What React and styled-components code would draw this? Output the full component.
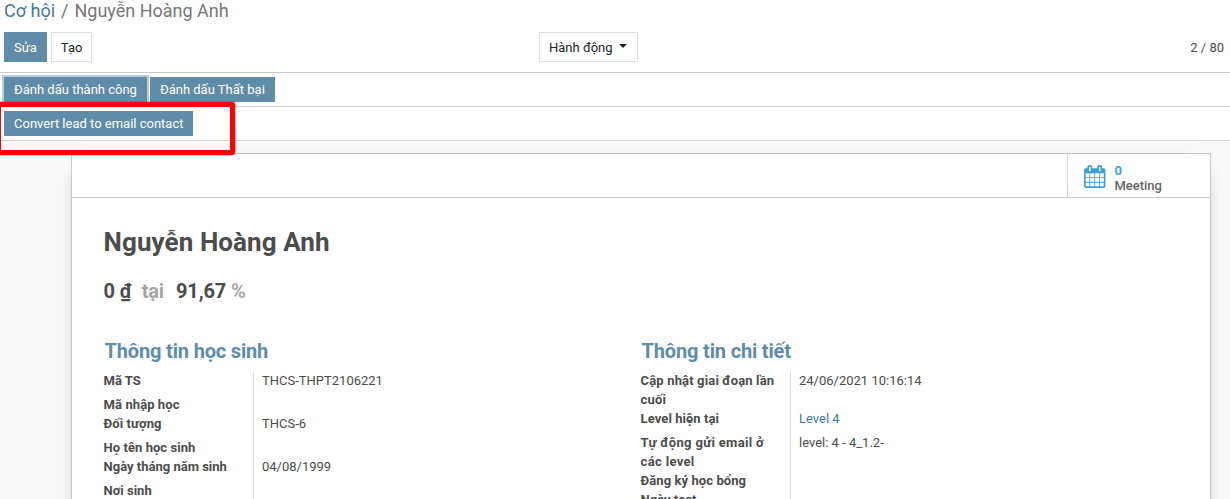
import React from 'react';
import styled, { createGlobalStyle } from 'styled-components';

const Global = createGlobalStyle`
  * { box-sizing: border-box; }
  html, body { margin: 0; height: 100%; overflow: hidden; }
  body {
    font-family: Roboto, "Noto Sans", sans-serif;
    font-size: 13px;
    line-height: 19px;
    color: #4c4c4c;
    background: #fff;
  }
`;

const Page = styled.div`
  position: relative;
  height: 499px;
  overflow: hidden;
  display: flex;
  flex-direction: column;
`;

const ControlPanel = styled.header`
  flex: none;
  height: 73px;
  padding: 0 6px 0 4px;
  border-bottom: 1px solid #c8c8c8;
`;

const Breadcrumb = styled.nav`
  display: flex;
  height: 32px;
  font-size: 18px;
  line-height: 22px;
  color: #777;
  a { color: #44799a; }
`;

const Slash = styled.span`
  margin: 0 6px;
`;

const Toolbar = styled.div`
  display: grid;
  grid-template-columns: 535px auto 1fr;
  align-items: center;
`;

const ButtonGroup = styled.div`
  display: flex;
  gap: 4px;
`;

const Button = styled.button`
  height: 30px;
  padding: 0 9px;
  font: inherit;
  color: ${(p) => (p.$primary ? '#fff' : '#212529')};
  background: ${(p) => (p.$primary ? '#5f8ca9' : '#fff')};
  border: 1px solid ${(p) => (p.$primary ? '#5f8ca9' : '#dee2e6')};
  display: flex;
  align-items: center;
  white-space: nowrap;
`;

const Caret = styled.span`
  margin: -3px 1px 0 6px;
  border: 4px solid transparent;
  border-top-color: #212529;
  border-bottom: 0;
`;

const Pager = styled.div`
  text-align: right;
`;

const StatusBar = styled.div`
  flex: none;
  display: flex;
  align-items: center;
  gap: 3px;
  height: 34px;
  padding-left: 4px;
  border-bottom: 1px solid #ced4da;
`;

const StatusButton = styled(Button)`
  height: 25px;
  padding-right: ${(p) => (p.$tight ? 8 : 9)}px;
  box-shadow: ${(p) => (p.$focused ? '0 0 0 2px #b9ceda' : 'none')};
`;

const FormView = styled.main`
  flex: 1;
  min-height: 0;
  padding: 12px 19px 0 71px;
  background: #f9f9f9;
`;

const Sheet = styled.section`
  height: 420px;
  background: #fff;
  border: 1px solid #c8c8d3;
  box-shadow: 0 5px 20px -15px #000;
`;

const ButtonBox = styled.div`
  display: flex;
  justify-content: flex-end;
  height: 44px;
  border-bottom: 1px solid #c9ccd2;
`;

const StatButton = styled.div`
  display: flex;
  width: 143px;
  padding: 9px 0 0 15.4px;
  border-left: 1px solid #ced4da;
  svg { display: block; margin-top: 2px; }
`;

const StatText = styled.div`
  margin-left: 7.5px;
  font-weight: 500;
  line-height: 15px;
  color: #666;
  b { display: block; color: #3f9fd8; font-weight: 700; }
`;

const SheetBody = styled.div`
  padding: 28px 32px 0 31.6px;
`;

const Title = styled.h1`
  margin: 0;
  font-size: 26px;
  line-height: 32px;
  font-weight: 700;
  letter-spacing: 0.08px;
`;

const Revenue = styled.h2`
  margin: 20px 0 0;
  font-size: 20px;
  line-height: 26px;
  font-weight: 700;
  letter-spacing: -0.15px;
  white-space: pre;
`;

const Muted = styled.span`
  color: #a6a6a6;
  margin: ${(p) => p.$margin || 0};
`;

const Groups = styled.div`
  display: grid;
  grid-template-columns: 537px 537px;
  margin-top: 34px;
`;

const GroupTitle = styled.h3`
  margin: 0 0 7px 1px;
  font-size: 20px;
  line-height: 26px;
  font-weight: 700;
  letter-spacing: -0.17px;
  color: #5f8ca9;
`;

const Field = styled.div`
  display: grid;
  grid-template-columns: 149.4px 1fr;
`;

const Label = styled.div`
  padding-right: 10px;
  font-weight: 700;
  letter-spacing: ${(p) => p.$tracking || 0}px;
`;

const Value = styled.div`
  padding: 0 0 ${(p) => (p.$filled ? 5 : 0)}px 8px;
  min-height: 19px;
  border-left: 1px solid #ddd;
  color: ${(p) => (p.$link ? '#44799a' : 'inherit')};
`;

const Highlight = styled.div`
  position: absolute;
  left: -4px;
  top: 102px;
  width: 239px;
  height: 53px;
  border: 5px solid #fe0000;
  border-radius: 3px;
  box-shadow: 0 0 0 0.5px rgba(254, 0, 0, 0.5);
`;

const CalendarIcon = () => (
  <svg width="23.5" height="23" viewBox="0 0 1792 1792" fill="#3f9fd8">
    <path d="M192 1664h288v-288h-288v288zm352 0h320v-288h-320v288zm-352-352h288v-320h-288v320zm352 0h320v-320h-320v320zm-352-384h288v-288h-288v288zm736 736h320v-288h-320v288zm-384-736h320v-288h-320v288zm768 736h288v-288h-288v288zm-384-352h320v-320h-320v320zm-352-864v-288q0-13-9.500-22.500t-22.500-9.500h-64q-13 0-22.500 9.500t-9.500 22.500v288q0 13 9.500 22.500t22.500 9.500h64q13 0 22.500-9.500t9.500-22.500zm736 864h288v-320h-288v320zm-384-384h320v-288h-320v288zm384 0h288v-288h-288v288zm32-480v-288q0-13-9.500-22.500t-22.500-9.500h-64q-13 0-22.500 9.500t-9.500 22.500v288q0 13 9.500 22.500t22.500 9.500h64q13 0 22.500-9.500t9.500-22.500zm384-64v1280q0 52-38 90t-90 38h-1408q-52 0-90-38t-38-90v-1280q0-52 38-90t90-38h128v-96q0-66 47-113t113-47h64q66 0 113 47t47 113v96h384v-96q0-66 47-113t113-47h64q66 0 113 47t47 113v96h128q52 0 90 38t38 90z" />
  </svg>
);

const student = [
  { label: 'Mã TS', value: 'THCS-THPT2106221' },
  { label: 'Mã nhập học', tracking: 0.08 },
  { label: 'Đối tượng', value: 'THCS-6', tracking: 0.08 },
  { label: 'Họ tên học sinh', tracking: 0.05 },
  { label: 'Ngày tháng năm sinh', value: '04/08/1999' },
  { label: 'Nơi sinh' },
];

const details = [
  { label: 'Cập nhật giai đoạn lần cuối', value: '24/06/2021 10:16:14', tracking: 0.15 },
  { label: 'Level hiện tại', value: 'Level 4', link: true, tracking: 0.08 },
  { label: 'Tự động gửi email ở các level', value: 'level: 4 - 4_1.2-', tracking: 0.33 },
  { label: 'Đăng ký học bổng', tracking: 0.08 },
  { label: 'Ngày test' },
];

const FieldGroup = ({ title, fields }) => (
  <div>
    <GroupTitle>{title}</GroupTitle>
    {fields.map((f) => (
      <Field key={f.label}>
        <Label $tracking={f.tracking}>{f.label}</Label>
        <Value $filled={!!f.value} $link={f.link}>{f.value}</Value>
      </Field>
    ))}
  </div>
);

export default function App() {
  return (
    <Page>
      <Global />
      <ControlPanel>
        <Breadcrumb><a>Cơ hội</a><Slash>/</Slash><span>Nguyễn Hoàng Anh</span></Breadcrumb>
        <Toolbar>
          <ButtonGroup>
            <Button $primary>Sửa</Button>
            <Button>Tạo</Button>
          </ButtonGroup>
          <Button>Hành động<Caret /></Button>
          <Pager>2 / 80</Pager>
        </Toolbar>
      </ControlPanel>
      <StatusBar>
        <StatusButton $primary $focused>Đánh dấu thành công</StatusButton>
        <StatusButton $primary>Đánh dấu Thất bại</StatusButton>
      </StatusBar>
      <StatusBar>
        <StatusButton $primary $tight>Convert lead to email contact</StatusButton>
      </StatusBar>
      <FormView>
        <Sheet>
          <ButtonBox>
            <StatButton>
              <CalendarIcon />
              <StatText><b>0</b>Meeting</StatText>
            </StatButton>
          </ButtonBox>
          <SheetBody>
            <Title>Nguyễn Hoàng Anh</Title>
            <Revenue>0 ₫<Muted $margin="0 12px 0 10.5px">tại</Muted>91,67 <Muted>%</Muted></Revenue>
            <Groups>
              <FieldGroup title="Thông tin học sinh" fields={student} />
              <FieldGroup title="Thông tin chi tiết" fields={details} />
            </Groups>
          </SheetBody>
        </Sheet>
      </FormView>
      <Highlight />
    </Page>
  );
}
